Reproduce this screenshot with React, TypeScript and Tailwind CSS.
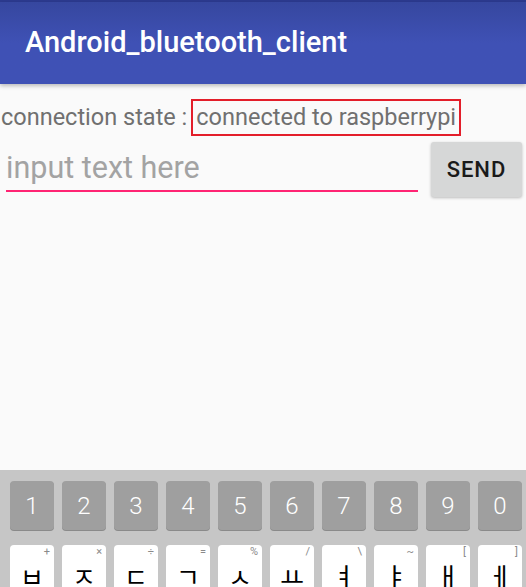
import React from "react";

const numbers = ["1", "2", "3", "4", "5", "6", "7", "8", "9", "0"];

const letters = [
  { main: "ㅂ", hint: "+" },
  { main: "ㅈ", hint: "×" },
  { main: "ㄷ", hint: "÷" },
  { main: "ㄱ", hint: "=" },
  { main: "ㅅ", hint: "%" },
  { main: "ㅛ", hint: "/" },
  { main: "ㅕ", hint: "\\" },
  { main: "ㅑ", hint: "~" },
  { main: "ㅐ", hint: "[" },
  { main: "ㅔ", hint: "]" },
];

function Keyboard() {
  return (
    <div className="h-[117px] shrink-0 bg-[#C6C6C6] pt-[11px] pl-[10px] flex flex-col gap-[15px]">
      <div className="flex gap-[8px]">
        {numbers.map((n) => (
          <div
            key={n}
            className="w-[44px] h-[49px] rounded-[4px] bg-[#9F9F9F] shadow-[0_1px_0_#8a8a8a] flex items-center justify-center text-white text-[24px] font-light"
          >
            {n}
          </div>
        ))}
      </div>
      <div className="flex gap-[8px]">
        {letters.map((k) => (
          <div
            key={k.main}
            className="relative w-[44px] h-[60px] rounded-[4px] bg-white flex justify-center"
          >
            <span className="absolute top-[0px] right-[4px] text-[11px] leading-[14px] text-[#8a8a8a]">{k.hint}</span>
            <span
              className="mt-[18px] text-[26px] leading-none text-black"
              style={{ fontFamily: '"Noto Sans CJK KR", sans-serif' }}
            >
              {k.main}
            </span>
          </div>
        ))}
      </div>
    </div>
  );
}

export default function App() {
  return (
    <div
      className="w-[526px] h-[587px] overflow-hidden bg-[#FAFAFA] flex flex-col"
      style={{ fontFamily: 'Roboto, "Noto Sans", sans-serif' }}
    >
      <div className="h-[2px] bg-[#2C3A8F] shrink-0" />
      <div className="h-[82px] shrink-0 bg-gradient-to-b from-[#36479F] via-[#3F51B5] to-[#3F51B5] flex items-center pl-[25px] shadow-[0_2px_4px_rgba(0,0,0,0.25)] relative z-10">
        <span className="text-white text-[29px] font-medium">Android_bluetooth_client</span>
      </div>

      <div className="mt-[15px] flex items-center">
        <span className="text-[#707070] text-[23.5px] leading-[33px] pl-[1px] pr-[4px]">connection state :</span>
        <span className="border-2 border-[#E31E2A] text-[#707070] text-[23.5px] leading-[33px] px-[3px]">
          connected to raspberrypi
        </span>
      </div>

      <div className="mt-[6px] flex items-start">
        <div className="ml-[6px] w-[412px] h-[50px] border-b-2 border-[#FF2473] flex items-center">
          <span className="text-[#A3A3A3] text-[30.5px] leading-none mt-[5px]">input text here</span>
        </div>
        <button className="ml-[13px] w-[91px] h-[55px] rounded-[3px] bg-[#D6D7D7] shadow-[0_1px_3px_rgba(0,0,0,0.25)] text-[#1A1A1A] text-[22px] font-medium tracking-[1px]">
          SEND
        </button>
      </div>

      <div className="flex-1" />
      <Keyboard />
    </div>
  );
}
